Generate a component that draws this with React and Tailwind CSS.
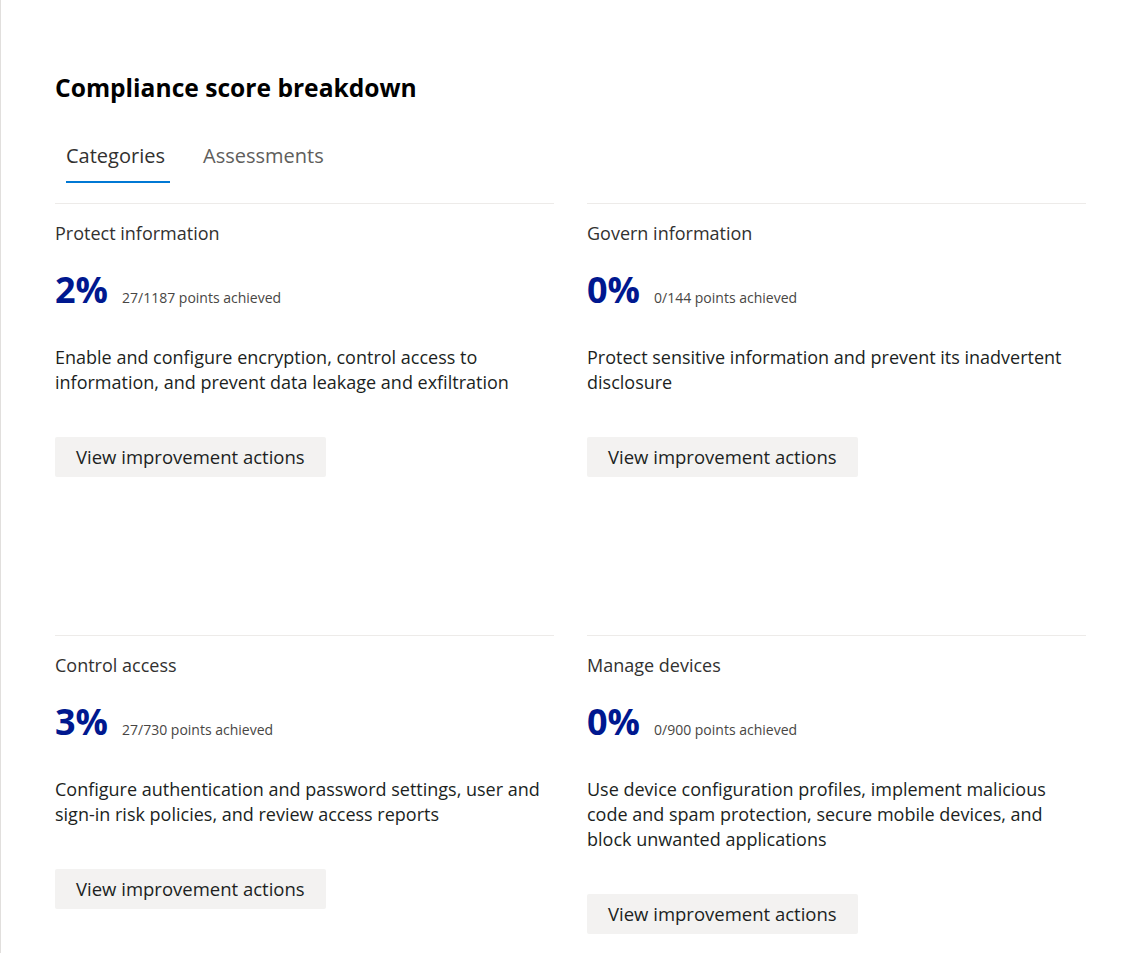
import React from "react";

const cards = [
  {
    title: "Protect information",
    pct: "2%",
    points: "27/1187 points achieved",
    desc: "Enable and configure encryption, control access to information, and prevent data leakage and exfiltration",
  },
  {
    title: "Govern information",
    pct: "0%",
    points: "0/144 points achieved",
    desc: "Protect sensitive information and prevent its inadvertent disclosure",
  },
  {
    title: "Control access",
    pct: "3%",
    points: "27/730 points achieved",
    desc: "Configure authentication and password settings, user and sign-in risk policies, and review access reports",
  },
  {
    title: "Manage devices",
    pct: "0%",
    points: "0/900 points achieved",
    desc: "Use device configuration profiles, implement malicious code and spam protection, secure mobile devices, and block unwanted applications",
  },
];

const App = () => {
  return (
    <div
      className="min-h-screen bg-white border-l border-[#e1dfdd] pl-[54px] pt-[72px]"
      style={{ fontFamily: '"Open Sans", "Noto Sans", sans-serif' }}
    >
      <h1 className="text-[24.6px] leading-[32px] font-bold text-black">
        Compliance score breakdown
      </h1>

      <div className="flex gap-[33px] ml-[11px] mt-[30px]">
        <button className="w-[104px] text-left pt-[8px] pb-[11px] border-b-[2px] border-[#0078d4] text-[20px] leading-[28px] text-[#323130]">
          Categories
        </button>
        <button className="pt-[8px] pb-[11px] border-b-[2px] border-transparent text-[20px] leading-[28px] text-[#605e5c]">
          Assessments
        </button>
      </div>

      <div className="grid grid-cols-2 gap-x-[33px] w-[1031px] mt-[20px]">
        {cards.map((c) => (
          <Card key={c.title} {...c} />
        ))}
      </div>
    </div>
  );
};

// one category block
const Card = ({ title, pct, points, desc }) => {
  return (
    <div className="border-t border-[#edebe9] min-h-[432px] pt-[17px]">
      <h2 className="text-[18px] leading-[24px] font-medium text-[#323130]">{title}</h2>
      <div className="flex items-baseline mt-[23px] h-[44px]">
        <span className="text-[36px] leading-[44px] font-bold text-[#00188f]">{pct}</span>
        <span className="ml-[14px] text-[14px] text-[#484644]">{points}</span>
      </div>
      <p className="mt-[33px] text-[18px] leading-[25px] text-[#201f1e]">{desc}</p>
      <button className="mt-[42px] h-[40px] px-[21px] bg-[#f3f2f1] rounded-[2px] text-[18.5px] text-[#201f1e]">
        View improvement actions
      </button>
    </div>
  );
};

export default App;
